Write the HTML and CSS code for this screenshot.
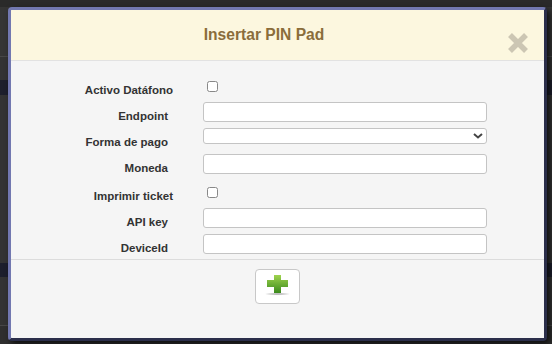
FILE: index.html
```html
<!DOCTYPE html>
<html lang="es">
<head>
  <meta charset="UTF-8" />
  <meta name="viewport" content="width=device-width, initial-scale=1.0">
  <title>Insertar PIN Pad</title>
  <link rel="stylesheet" href="styles.css">
</head>
<body>
  <div class="modal">
    <div class="modal-header">
      <h4 class="modal-title">Insertar PIN Pad</h4>
      <button class="close" type="button" aria-label="Cerrar">
        <svg width="22" height="22" viewBox="0 0 22 22">
          <path d="M3 3L19 19M19 3L3 19" stroke="#ccc6b3" stroke-width="5.5" />
        </svg>
      </button>
    </div>

    <div class="modal-body">
      <div class="form-row check-row">
        <label class="form-label">Activo Datáfono</label>
        <input type="checkbox" class="form-check">
      </div>
      <div class="form-row">
        <label class="form-label">Endpoint</label>
        <input type="text" class="form-input">
      </div>
      <div class="form-row">
        <label class="form-label">Forma de pago</label>
        <div class="select-wrap">
          <select class="form-select"><option></option></select>
          <svg class="chevron" width="10" height="6" viewBox="0 0 10 6">
            <path d="M1 1L5 4.5L9 1" stroke="#444" stroke-width="2" fill="none" />
          </svg>
        </div>
      </div>
      <div class="form-row">
        <label class="form-label">Moneda</label>
        <input type="text" class="form-input">
      </div>
      <div class="form-row check-row">
        <label class="form-label">Imprimir ticket</label>
        <input type="checkbox" class="form-check">
      </div>
      <div class="form-row">
        <label class="form-label">API key</label>
        <input type="text" class="form-input">
      </div>
      <div class="form-row">
        <label class="form-label">DeviceId</label>
        <input type="text" class="form-input">
      </div>
    </div>

    <div class="modal-footer">
      <button class="btn-add" type="button" aria-label="Añadir">
        <svg width="27" height="22" viewBox="0 0 27 22">
          <defs>
            <linearGradient id="plusGrad" x1="0" y1="0" x2="0" y2="1">
              <stop offset="0" stop-color="#9fd34e" />
              <stop offset="1" stop-color="#3a8a1c" />
            </linearGradient>
            <radialGradient id="shadowGrad">
              <stop offset="0" stop-color="#777" stop-opacity="0.7" />
              <stop offset="1" stop-color="#777" stop-opacity="0" />
            </radialGradient>
          </defs>
          <ellipse cx="13.5" cy="19" rx="13" ry="1.6" fill="url(#shadowGrad)" />
          <path d="M10 0h7v5h7v7h-7v6h-7v-6H3V5h7z" fill="url(#plusGrad)" />
        </svg>
      </button>
    </div>
  </div>
</body>
</html>
```

FILE: styles.css
```css
* {
  margin: 0;
  padding: 0;
  box-sizing: border-box;
}

body {
  font-family: 'Liberation Sans', Arial, sans-serif;
  background:
    linear-gradient(to bottom,
      #2a2a2a 0, #2a2a2a 7px,
      #353535 7px, #353535 56px,
      #474747 56px, #474747 57px,
      #333 57px, #333 80px,
      #1d1f2c 80px, #1d1f2c 95px,
      #333 95px, #333 263px,
      #1d1f2c 263px, #1d1f2c 277px,
      #333 277px, #333 325px,
      #474747 325px, #474747 326px,
      #2f2f2f 326px);
  height: 344px;
  overflow: hidden;
  padding: 7px 0 0 8px;
}

.modal {
  width: 539px;
  height: 334px;
  display: flex;
  flex-direction: column;
  background: #f5f5f5;
  border: 3px solid #2b2e4a;
  border-left-color: #7278b0;
  border-top-color: #7278b0;
  border-radius: 4px;
  box-shadow: 3px 3px 6px rgba(0, 0, 0, 0.7);
  overflow: hidden;
}

.modal-header {
  height: 51px;
  display: flex;
  align-items: center;
  padding: 0 15px;
  background: #fcf7df;
  border-bottom: 1px solid #e2e2e2;
}

.modal-title {
  flex: 1;
  text-align: center;
  font-size: 15.6px;
  font-weight: bold;
  color: #8a6d3b;
}

.close {
  width: 22px;
  height: 22px;
  margin: 15px 0 0 5px;
  border: none;
  background: none;
  cursor: pointer;
  display: flex;
}

.modal-body {
  flex: 0 0 auto;
  padding: 13px 0 5px;
  border-bottom: 1px solid #dcdcdc;
}

.form-row {
  display: flex;
  align-items: flex-start;
  margin-bottom: 6px;
}

.form-row:last-child {
  margin-bottom: 0;
}

.form-label {
  width: 162px;
  flex: 0 0 162px;
  height: 20px;
  margin-right: 30px;
  padding: 9px 5px 0 0;
  text-align: right;
  font-size: 11.5px;
  line-height: 11px;
  font-weight: bold;
  color: #333;
  white-space: nowrap;
}

.check-row .form-label {
  height: 22px;
  padding: 11px 0 0 0;
  line-height: 11px;
}

.form-check {
  appearance: none;
  width: 11px;
  height: 11px;
  margin: 7px 0 4px 4px;
  background: #fff;
  border: 1px solid #888;
  border-radius: 2.5px;
}

.form-input {
  width: 284px;
  height: 20px;
  background: #fff;
  border: 1px solid #c4c4c4;
  border-radius: 3px;
  font-family: inherit;
  font-size: 12px;
  padding: 0 4px;
}

.select-wrap {
  position: relative;
  width: 284px;
  margin-bottom: 4px;
}

.form-select {
  appearance: none;
  display: block;
  width: 100%;
  height: 16px;
  background: #fff;
  border: 1px solid #c4c4c4;
  border-radius: 3px;
  font-family: inherit;
  font-size: 11px;
}

.chevron {
  position: absolute;
  right: 4px;
  top: 5px;
}

.modal-footer {
  display: flex;
  justify-content: center;
  padding-top: 9px;
}

.btn-add {
  width: 45px;
  height: 35px;
  display: flex;
  align-items: center;
  justify-content: center;
  padding-bottom: 1px;
  background: #fff;
  border: 1px solid #c8c8c8;
  border-radius: 4px;
  cursor: pointer;
}
```
